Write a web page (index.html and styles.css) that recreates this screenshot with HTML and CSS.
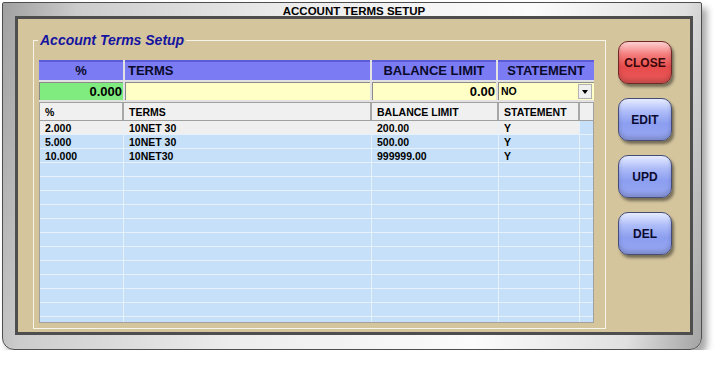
FILE: index.html
```html
<!DOCTYPE html>
<html lang="en">
  <head>
    <meta charset="UTF-8" />
    <title>Account Terms Setup</title>
    <link rel="stylesheet" href="styles.css">
  </head>
  <body>
    <div class="window">
      <div class="caption">ACCOUNT TERMS SETUP</div>
      <div class="panel">
        <div class="group">
          <span class="group-title">Account Terms Setup</span>
          <div class="entry">
            <div class="head">%</div>
            <div class="head head-left">TERMS</div>
            <div class="head">BALANCE LIMIT</div>
            <div class="head">STATEMENT</div>
            <div class="field field-pct">0.000</div>
            <div class="field"></div>
            <div class="field field-num">0.00</div>
            <div class="field combo">NO<span class="combo-btn"></span></div>
          </div>
          <div class="grid" id="grid">
            <div class="grid-row grid-head">
              <div>%</div><div>TERMS</div><div>BALANCE LIMIT</div><div>STATEMENT</div><div></div>
            </div>
          </div>
        </div>
        <div class="buttons">
          <button class="btn btn-red">CLOSE</button>
          <button class="btn btn-blue">EDIT</button>
          <button class="btn btn-blue">UPD</button>
          <button class="btn btn-blue">DEL</button>
        </div>
      </div>
    </div>

    <script>
      const terms = [
        ["2.000", "10NET 30", "200.00", "Y"],
        ["5.000", "10NET 30", "500.00", "Y"],
        ["10.000", "10NET30", "999999.00", "Y"],
      ];
      const grid = document.getElementById("grid");

      // fill the rest of the grid with blank rows
      for (let i = 0; i < 15; i++) {
        const row = document.createElement("div");
        row.className = "grid-row" + (i === 0 ? " selected" : "");
        const data = terms[i] || ["", "", "", ""];
        data.concat([""]).forEach((text) => {
          const cell = document.createElement("div");
          cell.textContent = text;
          row.appendChild(cell);
        });
        grid.appendChild(row);
      }
    </script>
  </body>
</html>
```

FILE: styles.css
```css
:root {
  --tan: #d4c59d;
  --frame-dark: #4e4e4e;
  --head-purple: #7b7bf3;
  --grid-blue: #c6e0fa;
  --grid-line: #e6f1fc;
}
* {
  box-sizing: border-box;
}
body {
  margin: 0;
  background: #fff;
  font-family: "Liberation Sans", Arial, sans-serif;
}
.window {
  margin: 2px 0 0 2px;
  width: 700px;
  height: 348px;
  border: 1px solid var(--frame-dark);
  border-radius: 2px 2px 12px 12px;
  background: linear-gradient(100deg, #a0a0a0 0%, #cccccc 10%, #ececec 38%, #fbfbfb 70%, #e0e0e0 90%, #a4a4a4 100%);
  box-shadow: 5px 6px 7px rgba(0, 0, 0, 0.35);
  padding: 0 8px 14px 12px;
  display: flex;
  flex-direction: column;
}
.caption {
  height: 13px;
  line-height: 17px;
  font-size: 11.5px;
  font-weight: bold;
  text-align: center;
  color: #000;
}
.panel {
  flex: 1;
  border: 3px solid var(--frame-dark);
  background: var(--tan);
  display: flex;
  gap: 12px;
  padding: 21px 0 0 15px;
}
.group {
  position: relative;
  width: 573px;
  height: 289px;
  border: 1px solid #f7f4ea;
  padding: 19px 0 0 5px;
}
.group-title {
  position: absolute;
  top: -10px;
  left: 4px;
  padding: 0 2px;
  background: var(--tan);
  color: #1414a0;
  font-size: 14px;
  font-weight: bold;
  font-style: italic;
  line-height: 18px;
}
.entry {
  width: 555px;
  display: grid;
  grid-template-columns: 84px 245px 124px 96px;
  grid-template-rows: 20px 18px;
  gap: 2px;
  background: #e2e2e2;
  padding-bottom: 2px;
}
.head {
  background: var(--head-purple);
  border-top: 2px solid #5c5cd8;
  color: #0a0a2a;
  font-size: 13px;
  font-weight: bold;
  line-height: 17px;
  text-align: center;
}
.head-left {
  text-align: left;
  padding-left: 3px;
}
.field {
  position: relative;
  background: #ffffc6;
  border-top: 1px solid #8a8a8a;
  border-left: 1px solid #8a8a8a;
  font-size: 13px;
  font-weight: bold;
  line-height: 17px;
  color: #000;
}
.field-pct {
  background: #80ec80;
  text-align: right;
  padding-right: 1px;
}
.field-num {
  text-align: right;
  padding-right: 1px;
}
.combo {
  font-size: 10.5px;
  padding-left: 2px;
}
.combo-btn {
  position: absolute;
  right: 2px;
  top: 1px;
  width: 14px;
  height: 15px;
  background: #f0f0f0;
  border: 1px solid #b0b0b0;
}
.combo-btn::after {
  content: "";
  position: absolute;
  left: 3px;
  top: 5px;
  border-left: 3px solid transparent;
  border-right: 3px solid transparent;
  border-top: 4px solid #000;
}
.grid {
  width: 555px;
  height: 221px;
  border: 1px solid #a0a0a0;
  background: var(--grid-blue);
  overflow: hidden;
}
.grid-row {
  display: flex;
  height: 14px;
  border-bottom: 1px solid var(--grid-line);
  font-size: 10.5px;
  font-weight: bold;
  line-height: 14px;
  color: #000;
}
.grid-row div {
  padding-left: 5px;
  border-right: 1px solid var(--grid-line);
  white-space: nowrap;
}
.grid-row div:nth-child(1) { width: 84px; }
.grid-row div:nth-child(2) { width: 248px; }
.grid-row div:nth-child(3) { width: 127px; }
.grid-row div:nth-child(4) { width: 81px; }
.grid-row div:nth-child(5) { flex: 1; border-right: none; }
.grid-head {
  height: 18px;
  line-height: 18px;
  background: #f0f0f0;
  border-bottom: 1px solid #a0a0a0;
}
.grid-head div {
  border-right: 2px solid #a8a8a8;
}
.selected div:not(:last-child) {
  background: #efefef;
}
.buttons {
  display: flex;
  flex-direction: column;
  gap: 14px;
  padding-top: 1px;
}
.btn {
  width: 54px;
  height: 43px;
  border-radius: 10px;
  border: 1px solid #454c78;
  font-family: "Liberation Sans", Arial, sans-serif;
  font-size: 12px;
  font-weight: bold;
  padding: 0;
  cursor: pointer;
  box-shadow: 2px 3px 3px rgba(0, 0, 0, 0.45), inset 0 -3px 4px rgba(0, 0, 0, 0.18);
}
.btn-red {
  background: linear-gradient(#fdd0d0 0%, #f47e7e 30%, #e84c4c 60%, #e85858 100%);
  border-color: #6e2828;
  color: #3a0808;
}
.btn-blue {
  background: linear-gradient(#e6ecff 0%, #aebcf8 30%, #8c9ef0 60%, #97a7f2 100%);
  color: #0a0a30;
}
```
